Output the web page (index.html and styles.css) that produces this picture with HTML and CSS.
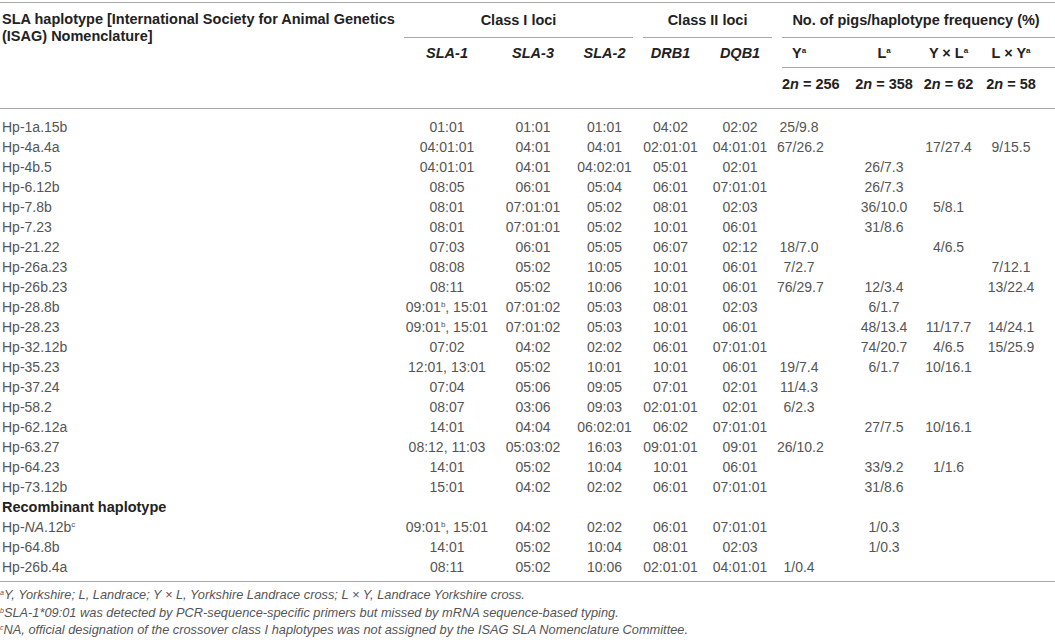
FILE: index.html
```html
<!DOCTYPE html>
<html>
<head>
<meta charset="utf-8">
<link rel="stylesheet" href="styles.css">
</head>
<body>
<table class="sla">
  <colgroup>
    <col class="c-name"><col class="c-sla1"><col class="c-sla3"><col class="c-sla2"><col class="c-drb"><col class="c-dqb"><col class="c-y"><col class="c-l"><col class="c-yl"><col class="c-ly">
  </colgroup>
  <thead>
    <tr class="hr1">
      <th rowspan="3" class="name-head">SLA haplotype [International Society for Animal Genetics<br>(ISAG) Nomenclature]</th>
      <th colspan="3" class="grp">Class I loci</th>
      <th colspan="2" class="grp">Class II loci</th>
      <th colspan="4" class="grp grp-last">No. of pigs/haplotype frequency (%)</th>
    </tr>
    <tr class="hr2">
      <th><i>SLA-1</i></th>
      <th><i>SLA-3</i></th>
      <th><i>SLA-2</i></th>
      <th><i>DRB1</i></th>
      <th><i>DQB1</i></th>
      <th class="ul ul-first col-y">Y<sup>a</sup></th>
      <th class="ul">L<sup>a</sup></th>
      <th class="ul">Y × L<sup>a</sup></th>
      <th class="ul col-ly">L × Y<sup>a</sup></th>
    </tr>
    <tr class="hr3">
      <th></th><th></th><th></th><th></th><th></th>
      <th class="n-left">2<i>n</i> = 256</th>
      <th>2<i>n</i> = 358</th>
      <th>2<i>n</i> = 62</th>
      <th class="col-ly">2<i>n</i> = 58</th>
    </tr>
  </thead>
  <tbody>
    <tr><td class="name">Hp-1a.15b</td><td>01:01</td><td>01:01</td><td>01:01</td><td>04:02</td><td>02:02</td><td class="col-y">25/9.8</td><td></td><td></td><td class="col-ly"></td></tr>
    <tr><td class="name">Hp-4a.4a</td><td>04:01:01</td><td>04:01</td><td>04:01</td><td>02:01:01</td><td>04:01:01</td><td class="col-y">67/26.2</td><td></td><td>17/27.4</td><td class="col-ly">9/15.5</td></tr>
    <tr><td class="name">Hp-4b.5</td><td>04:01:01</td><td>04:01</td><td>04:02:01</td><td>05:01</td><td>02:01</td><td class="col-y"></td><td>26/7.3</td><td></td><td class="col-ly"></td></tr>
    <tr><td class="name">Hp-6.12b</td><td>08:05</td><td>06:01</td><td>05:04</td><td>06:01</td><td>07:01:01</td><td class="col-y"></td><td>26/7.3</td><td></td><td class="col-ly"></td></tr>
    <tr><td class="name">Hp-7.8b</td><td>08:01</td><td>07:01:01</td><td>05:02</td><td>08:01</td><td>02:03</td><td class="col-y"></td><td>36/10.0</td><td>5/8.1</td><td class="col-ly"></td></tr>
    <tr><td class="name">Hp-7.23</td><td>08:01</td><td>07:01:01</td><td>05:02</td><td>10:01</td><td>06:01</td><td class="col-y"></td><td>31/8.6</td><td></td><td class="col-ly"></td></tr>
    <tr><td class="name">Hp-21.22</td><td>07:03</td><td>06:01</td><td>05:05</td><td>06:07</td><td>02:12</td><td class="col-y">18/7.0</td><td></td><td>4/6.5</td><td class="col-ly"></td></tr>
    <tr><td class="name">Hp-26a.23</td><td>08:08</td><td>05:02</td><td>10:05</td><td>10:01</td><td>06:01</td><td class="col-y">7/2.7</td><td></td><td></td><td class="col-ly">7/12.1</td></tr>
    <tr><td class="name">Hp-26b.23</td><td>08:11</td><td>05:02</td><td>10:06</td><td>10:01</td><td>06:01</td><td class="col-y">76/29.7</td><td>12/3.4</td><td></td><td class="col-ly">13/22.4</td></tr>
    <tr><td class="name">Hp-28.8b</td><td>09:01<sup>b</sup>, 15:01</td><td>07:01:02</td><td>05:03</td><td>08:01</td><td>02:03</td><td class="col-y"></td><td>6/1.7</td><td></td><td class="col-ly"></td></tr>
    <tr><td class="name">Hp-28.23</td><td>09:01<sup>b</sup>, 15:01</td><td>07:01:02</td><td>05:03</td><td>10:01</td><td>06:01</td><td class="col-y"></td><td>48/13.4</td><td>11/17.7</td><td class="col-ly">14/24.1</td></tr>
    <tr><td class="name">Hp-32.12b</td><td>07:02</td><td>04:02</td><td>02:02</td><td>06:01</td><td>07:01:01</td><td class="col-y"></td><td>74/20.7</td><td>4/6.5</td><td class="col-ly">15/25.9</td></tr>
    <tr><td class="name">Hp-35.23</td><td>12:01, 13:01</td><td>05:02</td><td>10:01</td><td>10:01</td><td>06:01</td><td class="col-y">19/7.4</td><td>6/1.7</td><td>10/16.1</td><td class="col-ly"></td></tr>
    <tr><td class="name">Hp-37.24</td><td>07:04</td><td>05:06</td><td>09:05</td><td>07:01</td><td>02:01</td><td class="col-y">11/4.3</td><td></td><td></td><td class="col-ly"></td></tr>
    <tr><td class="name">Hp-58.2</td><td>08:07</td><td>03:06</td><td>09:03</td><td>02:01:01</td><td>02:01</td><td class="col-y">6/2.3</td><td></td><td></td><td class="col-ly"></td></tr>
    <tr><td class="name">Hp-62.12a</td><td>14:01</td><td>04:04</td><td>06:02:01</td><td>06:02</td><td>07:01:01</td><td class="col-y"></td><td>27/7.5</td><td>10/16.1</td><td class="col-ly"></td></tr>
    <tr><td class="name">Hp-63.27</td><td>08:12, 11:03</td><td>05:03:02</td><td>16:03</td><td>09:01:01</td><td>09:01</td><td class="col-y">26/10.2</td><td></td><td></td><td class="col-ly"></td></tr>
    <tr><td class="name">Hp-64.23</td><td>14:01</td><td>05:02</td><td>10:04</td><td>10:01</td><td>06:01</td><td class="col-y"></td><td>33/9.2</td><td>1/1.6</td><td class="col-ly"></td></tr>
    <tr><td class="name">Hp-73.12b</td><td>15:01</td><td>04:02</td><td>02:02</td><td>06:01</td><td>07:01:01</td><td class="col-y"></td><td>31/8.6</td><td></td><td class="col-ly"></td></tr>
    <tr><td class="name section" colspan="10">Recombinant haplotype</td></tr>
    <tr><td class="name">Hp-<i>NA</i>.12b<sup>c</sup></td><td>09:01<sup>b</sup>, 15:01</td><td>04:02</td><td>02:02</td><td>06:01</td><td>07:01:01</td><td class="col-y"></td><td>1/0.3</td><td></td><td class="col-ly"></td></tr>
    <tr><td class="name">Hp-64.8b</td><td>14:01</td><td>05:02</td><td>10:04</td><td>08:01</td><td>02:03</td><td class="col-y"></td><td>1/0.3</td><td></td><td class="col-ly"></td></tr>
    <tr><td class="name">Hp-26b.4a</td><td>08:11</td><td>05:02</td><td>10:06</td><td>02:01:01</td><td>04:01:01</td><td class="col-y">1/0.4</td><td></td><td></td><td class="col-ly"></td></tr>
  </tbody>
</table>
<div class="notes">
  <p><sup>a</sup>Y, Yorkshire; L, Landrace; Y × L, Yorkshire Landrace cross; L × Y, Landrace Yorkshire cross.</p>
  <p><sup>b</sup>SLA-1*09:01 was detected by PCR-sequence-specific primers but missed by mRNA sequence-based typing.</p>
  <p><sup>c</sup>NA, official designation of the crossover class I haplotypes was not assigned by the ISAG SLA Nomenclature Committee.</p>
</div>
</body>
</html>
```

FILE: styles.css
```css
html, body {
  margin: 0;
  padding: 0;
  background: #ffffff;
}

body {
  font-family: "Liberation Sans", Arial, Helvetica, sans-serif;
  font-size: 14px;
  color: #555555;
}

.sla {
  border-collapse: collapse;
  table-layout: fixed;
  width: 1055px;
  margin-top: 2px;
  border-top: 1px solid #a8a8a8;
}

.c-name { width: 399px; }
.c-sla1 { width: 96px; }
.c-sla3 { width: 76px; }
.c-sla2 { width: 67px; }
.c-drb { width: 65px; }
.c-dqb { width: 74px; }
.c-y { width: 71px; }
.c-l { width: 72px; }
.c-yl { width: 57px; }
.c-ly { width: 78px; }

.sla th,
.sla td {
  padding: 0;
  white-space: nowrap;
  text-align: center;
  vertical-align: top;
  line-height: 20px;
}

.sla thead {
  border-bottom: 1px solid #a8a8a8;
}

.sla th {
  font-weight: bold;
  font-size: 14.5px;
  color: #222222;
}

.sla th i {
  font-style: italic;
}

.name-head {
  text-align: left !important;
  padding-left: 2px !important;
  padding-top: 8px !important;
  line-height: 17px !important;
}

.hr1 .grp {
  padding: 7px 0 8px;
  background: linear-gradient(#a8a8a8, #a8a8a8) center bottom / calc(100% - 10px) 1px no-repeat;
}

.hr1 .grp-last {
  background-position: right bottom;
  background-size: calc(100% - 5px) 1px;
}

.hr2 th {
  padding: 5px 0 5px;
}

.hr2 .ul {
  background: linear-gradient(#a8a8a8, #a8a8a8) right bottom / 100% 1px no-repeat;
}

.hr2 .ul-first {
  background-size: calc(100% - 5px) 1px;
}

.hr3 th {
  padding: 6px 0 14px;
}

.sla .hr3 .n-left {
  text-align: left;
  padding-left: 5px;
}

.sla .col-y {
  padding-right: 27px;
}

.sla .hr3 .n-left {
  padding-right: 0;
}

.sla .col-ly {
  padding-right: 10px;
}

.sla tbody {
  border-bottom: 1px solid #a8a8a8;
}

.sla tbody tr:first-child td {
  padding-top: 8px;
}

.sla tbody tr:last-child td {
  padding-bottom: 4px;
}

.sla td.name {
  text-align: left;
  padding-left: 2px;
}

.sla td.section {
  font-weight: bold;
  font-size: 14.5px;
  color: #222222;
}

sup {
  font-size: 8px;
  line-height: 0;
  vertical-align: 5px;
}

.notes {
  font-size: 12.8px;
  font-style: italic;
  color: #555555;
  padding-top: 4px;
}

.notes p {
  margin: 0;
  line-height: 17.5px;
  white-space: nowrap;
}

.notes sup {
  font-size: 7px;
  vertical-align: 4px;
}
```
